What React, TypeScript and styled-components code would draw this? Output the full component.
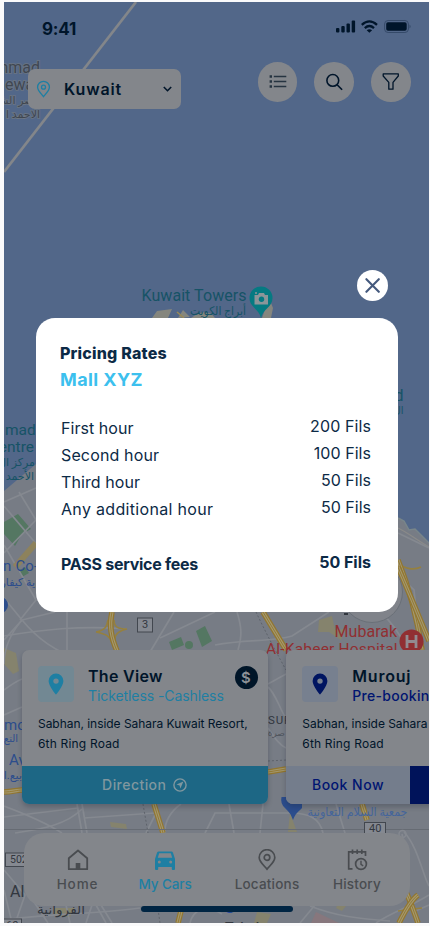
import React from 'react';
import styled, { createGlobalStyle } from 'styled-components';

const ink = '#00152a';
const paper = '#83868b';
const cyan = '#1e7fa3';
const navy = '#001571';

const GlobalStyle = createGlobalStyle`
  * { box-sizing: border-box; }
  body { margin: 0; background: #fafafb; font-family: Inter, sans-serif; }
  svg { display: block; flex: none; }
`;

const Page = styled.div`
  width: 430px;
  height: 926px;
  padding: 2px 1px 3px 4px;
  background: #fafafb;
  overflow: hidden;
`;
const Screen = styled.main`
  position: relative;
  height: 921px;
  display: flex;
  flex-direction: column;
  overflow: hidden;
  background: #526789;
  color: ${ink};
`;
const MapCanvas = styled.svg`
  position: absolute;
  inset: 0;
  font-family: Roboto, 'DejaVu Sans', sans-serif;
`;
const Content = styled.div`
  position: relative;
  flex: 1;
  display: flex;
  flex-direction: column;
`;
const Label = styled.span<{ $ls?: number }>`
  letter-spacing: ${(p) => p.$ls ?? 0}px;
  white-space: nowrap;
`;
const StatusBar = styled.header`
  display: flex;
  justify-content: space-between;
  height: 60px;
  padding: 17px 18px 0 38px;
  font-size: 17px;
  line-height: 20px;
  font-weight: 700;
`;
const Toolbar = styled.div`
  display: flex;
  justify-content: space-between;
  padding: 0 18.5px 0 24px;
`;
const CitySelect = styled.div`
  display: flex;
  align-items: center;
  width: 153px;
  height: 39.5px;
  margin-top: 7px;
  padding: 1px 8px 0;
  border-radius: 7px;
  background: ${paper};
  font-size: 16px;
  font-weight: 600;
`;
const CityName = styled(Label)`
  flex: 1;
  margin-left: 13px;
`;
const Tools = styled.div`
  display: flex;
  gap: 17px;
`;
const RoundButton = styled.button`
  display: grid;
  place-items: center;
  width: 39.6px;
  height: 39.6px;
  padding: 0;
  border: 0;
  border-radius: 50%;
  background: ${paper};
`;
const Bottom = styled.div`
  margin-top: auto;
  height: 273px;
`;
const Cards = styled.section`
  display: flex;
  gap: 18.8px;
  padding-left: 18px;
  overflow: hidden;
  height: 165px;
`;
const Card = styled.article`
  flex: none;
  width: 245.5px;
  height: 154px;
  display: flex;
  flex-direction: column;
  border-radius: 7px;
  overflow: hidden;
  background: ${paper};
  box-shadow: 0 3px 5px rgba(20, 28, 45, 0.25);
`;
const CardHead = styled.div`
  display: flex;
  height: 56px;
  padding: 16px 10px 0 16px;
`;
const PinTile = styled.div<{ $bg: string }>`
  display: grid;
  place-items: center;
  width: 36px;
  height: 36px;
  margin-right: 14px;
  border-radius: 4px;
  background: ${(p) => p.$bg};
`;
const CardTitles = styled.div`
  flex: 1;
  display: flex;
  flex-direction: column;
  line-height: 20px;
`;
const CardTitle = styled(Label)`
  font-size: 16px;
  font-weight: 600;
`;
const CardKind = styled(Label)<{ $color: string; $strong?: boolean }>`
  font-size: 14px;
  font-weight: ${(p) => (p.$strong ? 500 : 400)};
  color: ${(p) => p.$color};
`;
const PriceBadge = styled.div`
  display: grid;
  place-items: center;
  width: 23px;
  height: 23px;
  margin-left: -23px;
  border-radius: 50%;
  background: #001528;
  color: #8b9096;
  font-size: 15px;
  font-weight: 600;
`;
const Address = styled.p`
  display: flex;
  flex-direction: column;
  margin: 7.5px 0 0 16px;
  font-size: 12px;
  line-height: 20.4px;
  font-weight: 400;
`;
const CardFooter = styled.div`
  display: flex;
  height: 38.5px;
  margin-top: auto;
`;
const FooterAction = styled.div<{ $bg: string; $fg: string; $width?: number }>`
  display: flex;
  align-items: center;
  justify-content: center;
  gap: 7px;
  width: ${(p) => (p.$width ? `${p.$width}px` : 'auto')};
  flex: ${(p) => (p.$width ? 'none' : 1)};
  background: ${(p) => p.$bg};
  color: ${(p) => p.$fg};
  font-size: 14px;
  font-weight: 500;
`;
const TabBar = styled.nav`
  display: grid;
  grid-template-columns: 87.5px 102px 90px 70px;
  width: 386px;
  height: 72.5px;
  margin: 18px 0 0 19.5px;
  padding: 16px 0 0 19px;
  border-radius: 20px;
  background: ${paper};
`;
const Tab = styled.div<{ $active?: boolean }>`
  display: flex;
  flex-direction: column;
  align-items: center;
  width: 70px;
  gap: 3.5px;
  color: ${(p) => (p.$active ? '#1e7fa3' : '#494c50')};
  font-size: 13.5px;
  line-height: 18px;
  font-weight: 500;
`;
const HomeIndicator = styled.div`
  width: 152px;
  height: 5.5px;
  margin: 0.5px 0 0 137px;
  border-radius: 3px;
  background: #002543;
`;
const Dialog = styled.section`
  position: absolute;
  left: 32px;
  top: 268px;
  width: 362px;
  display: flex;
  flex-direction: column;
`;
const CloseButton = styled.button`
  align-self: flex-end;
  display: grid;
  place-items: center;
  width: 31px;
  height: 31px;
  margin-right: 10px;
  padding: 0;
  border: 0;
  border-radius: 50%;
  background: #fff;
`;
const Panel = styled.div`
  height: 294px;
  margin-top: 17px;
  padding: 22px 27px 0 25px;
  border-radius: 19px;
  background: #fff;
  color: #0c2a46;
`;
const Heading = styled.h2`
  margin: 0 0 0 -1px;
  font-size: 16px;
  line-height: 26px;
  font-weight: 800;
`;
const Place = styled.h3`
  margin: 0 0 21px -1px;
  color: #3cc0ee;
  font-size: 18px;
  line-height: 27px;
  font-weight: 700;
`;
const Rate = styled.div<{ $total?: boolean }>`
  display: flex;
  align-items: center;
  justify-content: space-between;
  height: 27.2px;
  margin-top: ${(p) => (p.$total ? 27.2 : 0)}px;
  font-size: 16px;
  font-weight: ${(p) => (p.$total ? 700 : 400)};
`;
const Amount = styled(Label)`
  padding-bottom: 4px;
`;

const RATES = [
  { name: 'First hour', price: '200 Fils', ls: 0.05, pls: 0.1 },
  { name: 'Second hour', price: '100 Fils', ls: 0.14, pls: 0.05 },
  { name: 'Third hour', price: '50 Fils', ls: 0.09, pls: 0 },
  { name: 'Any additional hour', price: '50 Fils', ls: 0.32, pls: 0 },
  { name: 'PASS service fees', price: '50 Fils', ls: -0.26, pls: 0, total: true },
];

const Pin = ({ color }: { color: string }) => (
  <svg width="16" height="22" viewBox="0 0 16 22">
    <path fillRule="evenodd" fill={color} d="M8 .5a7.4 7.4 0 0 0-7.4 7.4C.6 13 8 21.5 8 21.5S15.4 13 15.4 7.9A7.4 7.4 0 0 0 8 .5Zm0 4.9a2.7 2.7 0 1 1 0 5.4 2.7 2.7 0 0 1 0-5.4Z" />
  </svg>
);

const streets = [
  'M4 502 36 488', 'M4 506 38 546', 'M19 492 36 520', 'M4 553 36 520', 'M4 545 36 600 20 620', 'M4 598 22 620 4 640',
  'M22 620C36 637 54 652 86 662', 'M22 620 55 612', 'M22 620C10 634 4 650 4 664', 'M67 612V650', 'M4 636C40 630 80 625 127 629',
  'M150 652 174 612', 'M160 638 215 612', 'M237 612C242 628 242 636 238 650', 'M215 645C245 639 272 642 292 636L329 612',
  'M380 612C392 622 402 638 408 650', 'M398 533 429 548', 'M398 575 414 590 420 650', 'M268 684 286 674', 'M268 687C276 694 280 710 286 718M268 728C276 740 280 745 286 748',
  'M4 715 22 707', 'M4 690C12 684 17 681 22 679', 'M4 817 78 808', 'M15 833C40 829 65 826 82 809', 'M77 804 82 833M82 804 87 833',
  'M84 818 155 813', 'M4 806C28 815 48 824 62 833', 'M155 815 146 833', 'M165 833C164 822 171 811 181 804', 'M205 833 215 813 290 813C310 813 320 819 323 833',
  'M229 804 234 833', 'M263 804 260 833', 'M336 804 345 833', 'M4 870 25 895 17 918', 'M4 890 12 923', 'M32 899 48 923', 'M66 905 70 923',
  'M92 905 86 923', 'M101 905 112 923M96 905 106 923', 'M4 920C45 914 96 914 140 908', 'M222 914C205 904 193 910 190 923', 'M310 906C335 916 360 919 390 921',
  'M300 923 315 905', 'M376 923C392 912 410 907 429 895', 'M404 832C418 847 422 873 429 886', 'M402 834 408 865', 'M429 905 413 912',
];
const highways = [
  'M112 612C109 626 111 637 117 651', 'M263 612 286 650', 'M398 560C404 575 415 604 422 650', 'M398 567 412 600 429 641',
  'M4 792C12 792 17 790 22 790', 'M268 772 286 769', 'M154 804 163 833', 'M362 804 367 820', 'M181 911 178 923', 'M405 890C411 902 414 912 418 923', 'M399 923C404 913 411 900 418 895',
];
const ramps = ['M96 632C106 630 107 626 108 620M96 632C106 634 110 636 112 643M127 629C118 629 114 627 114 620M127 629C118 631 114 635 115 641', 'M398 562C404 570 415 570 421 567', 'M398 911 422 908'];
const parks = ['M4 522 18 514 31 529 22 534 15 546 4 534Z', 'M169 642 181 637 184 645 172 650Z', 'M196 631 205 626 212 641 202 647Z', 'M18 571 25 567 29 573 22 577Z'];

const CityMap = () => (
  <MapCanvas width="425" height="921" viewBox="4 2 425 921">
    <path d="M136 2 4 172" stroke="#83868a" strokeWidth="2.7" fill="none" />
    <path d="M4 491 36 464H398V518L404 521 409 530 415 529 424 538 429 543V923H4Z" fill="#777c85" />
    <path d="M398 518 404 521 409 530 415 529 424 538 429 543" fill="none" stroke="#78858a" strokeWidth="1.5" />
    <path d="M398 528C407 532 418 541 429 547" stroke="#8a8a89" strokeWidth="1.3" fill="none" />
    <path d="M4 648 16 653 19 671 13 674 4 664Z M110 822 126 824 127 829 111 827Z M319 620 332 616 335 630 345 629 341 640 329 632 318 632Z M290 813 297 832 288 832Z M337 906 346 906 342 911 336 908Z M53 908H75L70 917 54 916Z M257 912 271 914 267 923 254 923Z" fill="#85836d" />
    <path d="M316 912 339 923H311Z" fill="#87777d" />
    {parks.map((d) => <path key={d} d={d} fill="#547762" />)}
    <circle cx="189" cy="645" r="4" fill="#547762" />
    {streets.map((d) => <path key={d} d={d} stroke="#858990" strokeWidth="1.7" fill="none" />)}
    {ramps.map((d) => <path key={d} d={d} stroke="#95803f" strokeWidth="1.6" fill="none" />)}
    {highways.map((d) => (
      <g key={d} fill="none">
        <path d={d} stroke="#92762f" strokeWidth="5.6" />
        <path d={d} stroke="#a3986f" strokeWidth="3.2" />
        <path d={d} stroke="#92762f" strokeWidth="0.9" />
      </g>
    ))}
    <path d="M15 567 36 543" stroke="#8d825c" strokeWidth="6" />
    <path d="M256 612C265 631 275 650 286 670M268 761 286 760M143 804 148 833M158 909 160 923" fill="none" stroke="#5e636b" strokeDasharray="2 2" />
    <path d="M4 829.5H429" stroke="#666b73" strokeWidth="1.2" />

    <g fill="#383e48" fillOpacity=".85" stroke="#747a80" strokeWidth="2" paintOrder="stroke" strokeOpacity=".6">
      <text x="40" y="73" fontSize="16" textAnchor="end">hmad</text>
      <text x="5" y="90" fontSize="16">ewa</text>
      <text x="40" y="104" fontSize="11" textAnchor="end">ناصر الش</text>
      <text x="40" y="118" fontSize="11" textAnchor="end">الاحمد ا</text>
    </g>
    <g fill="#165366">
      <path d="M152 318 157 311 172 309 168 318Z M178 318 183 310 190 317Z M191 318C201 311 209 310 215 318Z M262 318 269 298 273 308 271 318Z" fill="#85867e" />
      <path d="M177 312 184 318" stroke="#9a8a54" strokeWidth="1.5" />
      <text x="141.5" y="300.5" fontSize="16" letterSpacing=".06">Kuwait Towers</text>
      <text x="190" y="315" fontSize="12" textLength="56" lengthAdjust="spacingAndGlyphs">أبراج الكويت</text>
      <path d="M261 286.5A11.5 11.5 0 0 0 249.5 298C249.5 307 259 309 261 318 263 309 272.5 307 272.5 298A11.5 11.5 0 0 0 261 286.5Z" fill="#057a82" />
      <path d="M254.5 295H258L259 293H264L265 295H268V304.5H254.5Z" fill="#8b9599" /><circle cx="261.5" cy="299.3" r="2.7" fill="#057a82" /><circle cx="256" cy="293" r="1" fill="#8b9599" />
      <text x="403.5" y="401" fontSize="16" textAnchor="end">d</text>
      <text x="403.5" y="414" fontSize="10" textAnchor="end">ال</text>
      <text x="5" y="434.5" fontSize="15.5">mad</text>
      <text x="34" y="452" fontSize="15.5" textAnchor="end">entre</text>
      <text x="35" y="466" fontSize="11" textAnchor="end">مركز ال</text>
      <text x="34" y="480" fontSize="11" textAnchor="end">الأحمد</text>
    </g>
    <g fill="#2c4d8c">
      <text x="3" y="571" fontSize="15" letterSpacing=".2">n Co-</text>
      <text x="35" y="586" fontSize="11" textAnchor="end">ية كيفار</text>
      <text x="4" y="730" fontSize="15">mo</text>
      <text x="18" y="742" fontSize="10" textAnchor="end">التع</text>
      <text x="9" y="765" fontSize="15">Av</text>
      <text x="22" y="779" fontSize="11" textAnchor="end">بيع.الـ</text>
      <circle cx="0" cy="605" r="8" />
      <path d="M281.5 797A11.5 11.5 0 0 0 285 808C289 812 291 814 293 820 295 814 298 812 302 808V797Z" />
      <text x="307.5" y="816" fontSize="12" textLength="100" lengthAdjust="spacingAndGlyphs" fill="#45659b">جمعية السلام التعاونية</text>
    </g>
    <circle cx="372" cy="592" r="30.5" fill="#80838a" stroke="#6a7078" />
    <g fill="#912f32">
      <text x="334.5" y="637" fontSize="16" letterSpacing=".05">Mubarak</text>
      <text x="266" y="654" fontSize="15.5" letterSpacing=".2">Al-Kabeer Hospital</text>
      <circle cx="411.5" cy="641.5" r="12" />
      <path d="M407 635V648M416 635V648M407 641.5H416" stroke="#928b90" strokeWidth="2.8" />
    </g>
    <g fill="#32373f">
      <rect x="137.5" y="618" width="15" height="14" fill="#858991" stroke="#42474f" />
      <text x="142" y="628" fontSize="11">3</text>
      <path d="M344 613H348V615H344Z" />
      <text x="268" y="723.5" fontSize="11.5" letterSpacing=".8">SUR</text>
      <text x="285" y="736" fontSize="9" textAnchor="end" fillOpacity=".6">صرة</text>
      <rect x="5.5" y="853" width="27" height="13.5" fill="#858991" stroke="#42474f" />
      <text x="10" y="862.5" fontSize="10.5">502</text>
      <rect x="364.5" y="822.5" width="21" height="15" fill="#858991" stroke="#42474f" />
      <text x="369" y="831.5" fontSize="11">40</text>
      <text x="10" y="897" fontSize="16">Al</text>
      <text x="37" y="913.5" fontSize="13" textLength="48" lengthAdjust="spacingAndGlyphs">الفروانية</text>
      <rect x="3.5" y="919" width="18" height="10" fill="#858991" stroke="#42474f" />
      <text x="6" y="928.5" fontSize="11">60</text>
      <text x="225" y="932.5" fontSize="14" fontWeight="500">Tabuk</text>
      <circle cx="402.5" cy="834" r="3.5" fill="none" stroke="#858990" strokeWidth="1.5" />
    </g>
    <text x="188" y="909" fontSize="20" fontWeight="500"><tspan fill="#254a9b">G</tspan><tspan fill="#922b2d">o</tspan><tspan fill="#90742a">o</tspan><tspan fill="#254a9b">g</tspan><tspan fill="#276d45">l</tspan><tspan fill="#922b2d">e</tspan></text>
  </MapCanvas>
);

export default function App() {
  return (
    <Page>
      <GlobalStyle />
      <Screen>
        <CityMap />
        <Content>
          <StatusBar>
            <Label $ls={-0.19}>9:41</Label>
            <svg width="76" height="14" viewBox="336 20.5 76 14" fill={ink}>
              <rect x="337" y="29.5" width="3.4" height="4.5" rx="1" />
              <rect x="342.3" y="27.5" width="3.4" height="6.5" rx="1" />
              <rect x="347.5" y="25" width="3.4" height="9" rx="1" />
              <rect x="352.7" y="22" width="3.4" height="12" rx="1" />
              <g fill="none" stroke={ink} strokeWidth="2.3">
                <path d="M362.8 26.3Q370.4 19.5 378 26.3" />
                <path d="M365.8 29.6Q370.4 25.5 375 29.6" />
              </g>
              <path d="M367.7 31.8Q370.4 29.6 373.1 31.8L370.4 34.2Z" />
              <rect x="385.6" y="22" width="23.8" height="12" rx="3.5" fill="none" stroke="#354a69" />
              <rect x="387.2" y="23.8" width="20.5" height="8.4" rx="1.8" />
              <path d="M410.5 26V30C412 29 412 27 410.5 26Z" fill="#354a69" />
            </svg>
          </StatusBar>
          <Toolbar>
            <CitySelect>
              <svg width="15" height="18" viewBox="0 0 15 18" fill="none" stroke={cyan} strokeWidth="1.3">
                <path d="M7.5 16.6C5.2 13.7 1.6 10.5 1.6 7.2a5.9 5.9 0 0 1 11.8 0c0 3.3-3.6 6.5-5.9 9.4Z" />
                <circle cx="7.5" cy="7.2" r="2" />
              </svg>
              <CityName $ls={0.84}>Kuwait</CityName>
              <svg width="11" height="8" viewBox="0 0 11 8" fill="none" stroke={ink} strokeWidth="1.6"><path d="m1.8 2 3.7 3.7L9.2 2" /></svg>
            </CitySelect>
            <Tools>
              <RoundButton aria-label="List">
                <svg width="18" height="15" viewBox="0 0 18 15" stroke="#263441" fill="none" strokeWidth="1.6">
                  <path d="M4.8 2.5H17.3M4.8 7.5H17.3M4.8 12.5H17.3" />
                  <path d="M.6 2.5H3M.6 7.5H3M.6 12.5H3" strokeWidth="2.6" />
                </svg>
              </RoundButton>
              <RoundButton aria-label="Search">
                <svg width="18" height="18" viewBox="0 0 18 18" stroke={ink} fill="none" strokeWidth="1.6"><circle cx="7.8" cy="7.4" r="5.9" /><path d="m12.1 11.7 5 5" /></svg>
              </RoundButton>
              <RoundButton aria-label="Filter">
                <svg width="18" height="18" viewBox="0 0 18 18" stroke={ink} fill="none" strokeWidth="1.3" strokeLinejoin="round"><path d="M1.2.9H16.3V3L11 9.4V16.2H6.8V9.4L1.2 3Z" /></svg>
              </RoundButton>
            </Tools>
          </Toolbar>
          <Bottom>
            <Cards>
              <Card>
                <CardHead>
                  <PinTile $bg="#728893"><Pin color={cyan} /></PinTile>
                  <CardTitles>
                    <CardTitle $ls={0.3}>The View</CardTitle>
                    <CardKind $ls={-0.08} $color={cyan}>Ticketless -Cashless</CardKind>
                  </CardTitles>
                  <PriceBadge>$</PriceBadge>
                </CardHead>
                <Address>
                  <Label $ls={-0.04}>Sabhan, inside Sahara Kuwait Resort,</Label>
                  <Label $ls={0.18}>6th Ring Road</Label>
                </Address>
                <CardFooter>
                  <FooterAction $bg="#1d6785" $fg="#80979f">
                    <Label $ls={0.45}>Direction</Label>
                    <svg width="14" height="14" viewBox="0 0 14 14" fill="none" stroke="#80979f" strokeWidth="1.4"><circle cx="7" cy="7" r="6.1" /><path d="M10.4 3.6 3.5 6.6 6.6 7.4 7.4 10.5Z" fill="#80979f" stroke="none" /></svg>
                  </FooterAction>
                </CardFooter>
              </Card>
              <Card>
                <CardHead>
                  <PinTile $bg="#77808f"><Pin color="#001561" /></PinTile>
                  <CardTitles>
                    <CardTitle $ls={0.78}>Murouj</CardTitle>
                    <CardKind $ls={0.3} $color={navy} $strong>Pre-booking</CardKind>
                  </CardTitles>
                </CardHead>
                <Address>
                  <Label $ls={-0.04}>Sabhan, inside Sahara Kuwait Resort,</Label>
                  <Label $ls={0.18}>6th Ring Road</Label>
                </Address>
                <CardFooter>
                  <FooterAction $bg="#747d8c" $fg={navy} $width={123.4}><Label $ls={0.5}>Book Now</Label></FooterAction>
                  <FooterAction $bg="#00135a" $fg="#80858f" />
                </CardFooter>
              </Card>
            </Cards>
            <TabBar>
              <Tab>
                <svg width="22" height="22" viewBox="0 0 22 22" fill="none" stroke="#494c50" strokeWidth="1.8" strokeLinejoin="round"><path d="M1.8 9.3 11 1.5 20.2 9.3V20.2H1.8Z" /><path d="M8.7 14H13.3V20H8.7Z" fill="#494c50" stroke="none" /></svg>
                <Label $ls={0.9}>Home</Label>
              </Tab>
              <Tab $active>
                <svg width="22" height="22" viewBox="0 0 22 22" fill={cyan}><path fillRule="evenodd" d="M4.7 2.5H17.3Q18.5 2.5 19 3.8L21 10V20Q21 21 20 21H18.8Q17.8 21 17.8 20V18H4.2V20Q4.2 21 3.2 21H2Q1 21 1 20V10L3 3.8Q3.5 2.5 4.7 2.5ZM5.2 4.3 3.8 8.7H18.2L16.8 4.3ZM5.3 11.4A1.5 1.5 0 1 0 5.3 14.4 1.5 1.5 0 1 0 5.3 11.4ZM16.7 11.4A1.5 1.5 0 1 0 16.7 14.4 1.5 1.5 0 1 0 16.7 11.4Z" /></svg>
                <Label $ls={-0.1}>My Cars</Label>
              </Tab>
              <Tab>
                <svg width="22" height="22" viewBox="0 0 22 22" fill="none" stroke="#494c50" strokeWidth="1.7"><path d="M11 20.2C8.5 17 3.2 13 3.2 8.5a7.8 7.8 0 0 1 15.6 0C18.8 13 13.5 17 11 20.2Z" /><circle cx="11" cy="8.5" r="2.8" /></svg>
                <Label $ls={0.2}>Locations</Label>
              </Tab>
              <Tab>
                <svg width="22" height="22" viewBox="0 0 22 22" fill="none" stroke="#494c50" strokeWidth="1.7"><path d="M6.5 19.8H2.7V2.8H19.5V7M6.5.5V5M11.2.5V5M15.8.5V5" /><circle cx="15" cy="15" r="5.4" /><path d="M15 11.8V15.4L17.2 16.8" strokeWidth="1.4" /></svg>
                <Label $ls={0.2}>History</Label>
              </Tab>
            </TabBar>
            <HomeIndicator />
          </Bottom>
        </Content>
        <Dialog>
          <CloseButton aria-label="Close">
            <svg width="15" height="15" viewBox="0 0 15 15" stroke="#44597d" strokeWidth="2.1" strokeLinecap="round"><path d="m1.4 1.2 12.4 12.6M13.8 1.2 1.4 13.8" /></svg>
          </CloseButton>
          <Panel>
            <Heading><Label $ls={0.19}>Pricing Rates</Label></Heading>
            <Place><Label $ls={0.4}>Mall XYZ</Label></Place>
            {RATES.map((r) => (
              <Rate key={r.name} $total={r.total}>
                <Label $ls={r.ls}>{r.name}</Label>
                <Amount $ls={r.pls}>{r.price}</Amount>
              </Rate>
            ))}
          </Panel>
        </Dialog>
      </Screen>
    </Page>
  );
}
